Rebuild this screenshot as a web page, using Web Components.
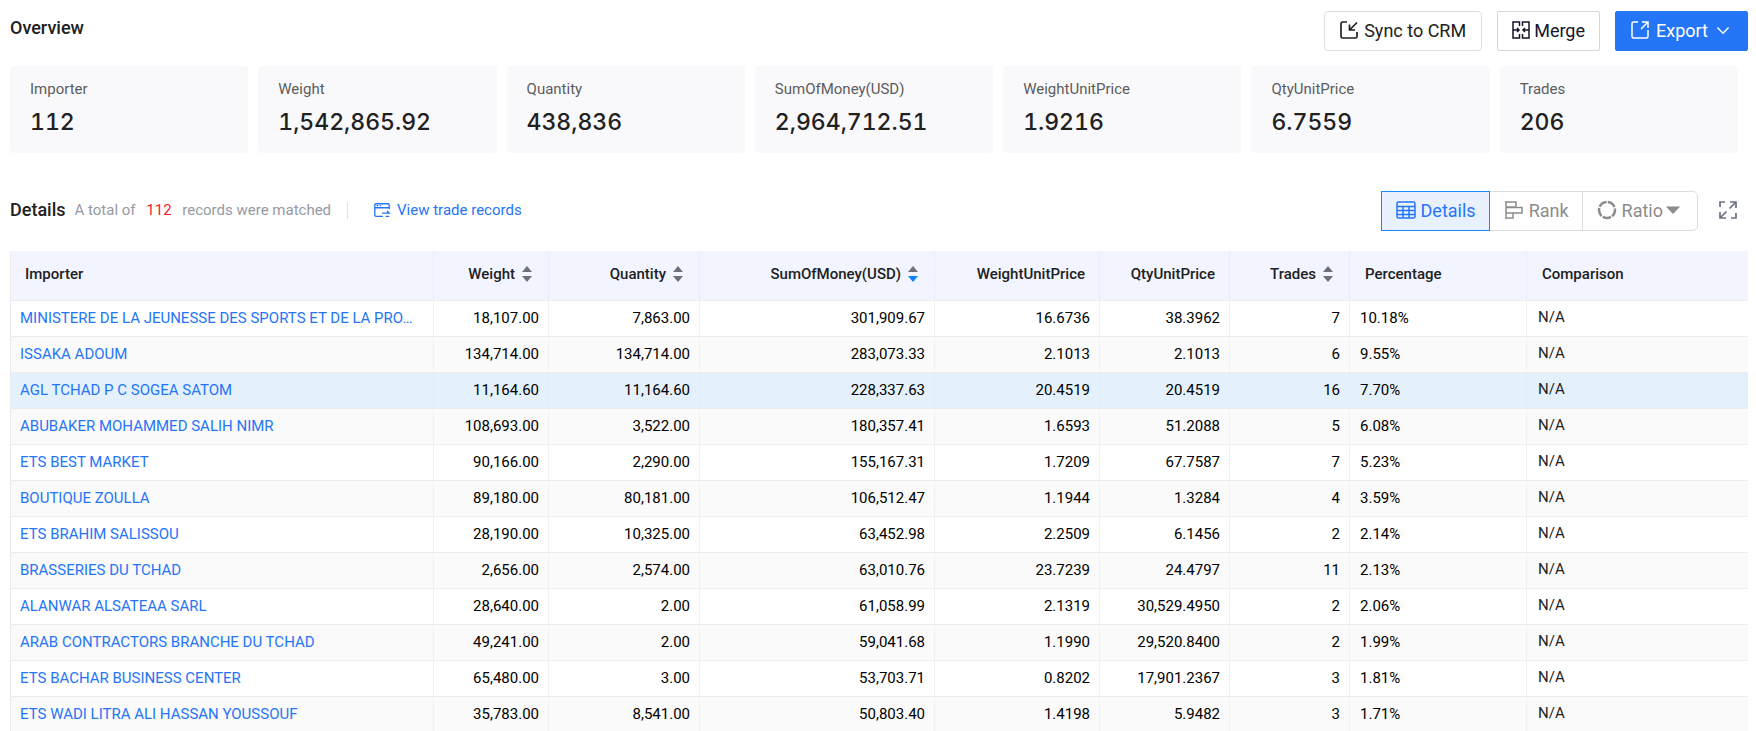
<!DOCTYPE html>
<html lang="en">
<head>
<meta charset="utf-8">
<title>Overview</title>
<style>
    html, body {
        margin: 0;
        height: 100%;
        overflow: hidden;
    }
    body {
        background: #fff;
        color: #212121;
        font-family: Roboto, 'Liberation Sans', sans-serif;
        font-size: 15px;
    }
</style>
</head>
<body>
<trade-page></trade-page>

<script>
const icons = {
    sync: '<path d="M8 2H3.500A1.500 1.500 0 0 0 2 3.500V16.500A1.500 1.500 0 0 0 3.500 18H16.500A1.500 1.500 0 0 0 18 16.500V12M18 2.500L10.500 10M10.500 4.500V10H16" stroke-width="1.700"/>',
    merge: '<path d="M8.500 6V2H2V18H8.500V14M11.500 6V2H18V18H11.500V14M2 10H8M18 10H12M6 8L8 10L6 12M14 8L12 10L14 12" stroke-width="1.500"/>',
    export: '<path d="M8 2H3.500A1.500 1.500 0 0 0 2 3.500V16.500A1.500 1.500 0 0 0 3.500 18H16.500A1.500 1.500 0 0 0 18 16.500V10M11 9L18 2M12 2H18V8" stroke-width="1.500"/>',
    down: '<path d="M3 7L10 14L17 7" stroke-width="1.800"/>',
    grid: '<path d="M1 3.500A1.500 1.500 0 0 1 2.500 2H17.500A1.500 1.500 0 0 1 19 3.500V16.500A1.500 1.500 0 0 1 17.500 18H2.500A1.500 1.500 0 0 1 1 16.500ZM1 6.500H19M1 10.500H19M1 14.500H19M7 6.500V18M13 6.500V18" stroke-width="1.500"/>',
    rank: '<path d="M2 1V19M2 2H12V7H2M2 7.500H18V13H2M2 13H9V18H2" stroke-width="1.500"/>',
    ratio: '<circle cx="10" cy="10" r="8" stroke-width="2.500" pathLength="60" stroke-dasharray="10.500 1.500" stroke-dashoffset="-1" transform="rotate(-90 10 10)"/>',
    caret: '<path d="M1 5.500H19L10 15Z" fill="currentColor" stroke="none"/>',
    full: '<path d="M2 7V2H7M18 13V18H13M12 2H18V8M18 2L11.500 8.500M8 18H2V12M2 18L8.500 11.500" stroke-width="1.700"/>',
    records: '<path d="M18 9V4.500A1.500 1.500 0 0 0 16.500 3H3.500A1.500 1.500 0 0 0 2 4.500V15.500A1.500 1.500 0 0 0 3.500 17H11M2 7.500H18M4 5.200H6M7.500 5.200H9M10 13.500H18L15.500 11M18 17H14" stroke-width="1.500"/>'
};

class TradeIcon extends HTMLElement {
    connectedCallback() {
        this.root = this.attachShadow({ mode: 'open' });
        this.root.innerHTML = `
            <style>
                :host {
                    display: inline-flex;
                    flex: none;
                    width: 20px;
                    height: 20px;
                }
                svg {
                    width: 100%;
                    height: 100%;
                    fill: none;
                    stroke: currentColor;
                }
            </style>
            <svg viewBox="${this.getAttribute('crop') || '0 0 20 20'}" aria-hidden="true">${icons[this.getAttribute('name')]}</svg>
        `;
    }
}

class TradeButton extends HTMLElement {
    connectedCallback() {
        this.root = this.attachShadow({ mode: 'open' });
        this.root.innerHTML = `
            <style>
                :host {
                    display: block;
                }
                button {
                    display: flex;
                    align-items: center;
                    gap: 6px;
                    height: 40px;
                    padding: 0 15px 2px;
                    border: 1px solid #dcdfe6;
                    border-radius: 4px;
                    background: #fff;
                    color: #212121;
                    font: inherit;
                    font-size: 18px;
                    cursor: pointer;
                }
                :host([kind=primary]) button {
                    gap: 7px;
                    padding: 0 16px 2px 15px;
                    border-color: #2575f7;
                    border-radius: 2px;
                    background: #2575f7;
                    color: #fff;
                }
                :host([kind=square]) button {
                    gap: 4px;
                    padding: 0 14px 2px;
                    border-color: #d5d6e0;
                    border-radius: 2px;
                    color: #15152b;
                }
            </style>
            <button type="button"><slot></slot></button>
        `;
    }
}

class StatCard extends HTMLElement {
    connectedCallback() {
        this.root = this.attachShadow({ mode: 'open' });
        this.root.innerHTML = `
            <style>
                :host {
                    display: block;
                    flex: 1;
                    min-width: 0;
                    padding: 12px 20px 14px;
                    border-radius: 4px;
                    background: #f9f9fc;
                }
                .label {
                    color: #5c5c5c;
                    line-height: 22px;
                }
                .value {
                    margin-top: 5px;
                    font-family: Inter, Roboto, sans-serif;
                    font-size: 23px;
                    font-weight: 500;
                    font-variant-numeric: tabular-nums;
                    line-height: 34px;
                }
            </style>
            <div class="label">${this.getAttribute('label')}</div>
            <div class="value"><slot></slot></div>
        `;
    }
}

class ViewSwitch extends HTMLElement {
    connectedCallback() {
        this.root = this.attachShadow({ mode: 'open' });
        this.root.innerHTML = `
            <style>
                :host {
                    display: flex;
                }
                button {
                    display: flex;
                    align-items: center;
                    gap: 5px;
                    height: 40px;
                    margin-left: -1px;
                    padding: 0 13px 2px 14px;
                    border: 1px solid #dcdcdc;
                    background: #fff;
                    color: #8c8c8c;
                    font: inherit;
                    font-size: 18px;
                    cursor: pointer;
                }
                button:first-child {
                    border-radius: 5px 0 0 5px;
                }
                button:last-child {
                    border-radius: 0 5px 5px 0;
                }
                button[aria-pressed=true] {
                    z-index: 1;
                    border-color: #1989fa;
                    background: #e9f1ff;
                    color: #2575f7;
                }
                .menu {
                    gap: 2px;
                    padding-right: 16px;
                }
                .menu trade-icon:first-child {
                    margin-right: 3px;
                }
                .small {
                    width: 16px;
                    height: 16px;
                }
            </style>
            <button type="button" aria-pressed="true"><trade-icon name="grid"></trade-icon>Details</button>
            <button type="button" aria-pressed="false"><trade-icon name="rank"></trade-icon>Rank</button>
            <button type="button" aria-pressed="false" class="menu"><trade-icon name="ratio"></trade-icon>Ratio<trade-icon class="small" name="caret"></trade-icon></button>
        `;
    }
}

const columns = [
    { title: 'Importer', width: 423, left: true },
    { title: 'Weight', width: 115, sort: true },
    { title: 'Quantity', width: 151, sort: true },
    { title: 'SumOfMoney(USD)', width: 235, sort: true, active: true },
    { title: 'WeightUnitPrice', width: 165 },
    { title: 'QtyUnitPrice', width: 130 },
    { title: 'Trades', width: 120, sort: true },
    { title: 'Percentage', width: 177, left: true },
    { title: 'Comparison', left: true }
];

const rows = [
    ['MINISTERE DE LA JEUNESSE DES SPORTS ET DE LA PRO…', '18,107.00', '7,863.00', '301,909.67', '16.6736', '38.3962', '7', '10.18%'],
    ['ISSAKA ADOUM', '134,714.00', '134,714.00', '283,073.33', '2.1013', '2.1013', '6', '9.55%'],
    ['AGL TCHAD P C SOGEA SATOM', '11,164.60', '11,164.60', '228,337.63', '20.4519', '20.4519', '16', '7.70%'],
    ['ABUBAKER MOHAMMED SALIH NIMR', '108,693.00', '3,522.00', '180,357.41', '1.6593', '51.2088', '5', '6.08%'],
    ['ETS BEST MARKET', '90,166.00', '2,290.00', '155,167.31', '1.7209', '67.7587', '7', '5.23%'],
    ['BOUTIQUE ZOULLA', '89,180.00', '80,181.00', '106,512.47', '1.1944', '1.3284', '4', '3.59%'],
    ['ETS BRAHIM SALISSOU', '28,190.00', '10,325.00', '63,452.98', '2.2509', '6.1456', '2', '2.14%'],
    ['BRASSERIES DU TCHAD', '2,656.00', '2,574.00', '63,010.76', '23.7239', '24.4797', '11', '2.13%'],
    ['ALANWAR ALSATEAA SARL', '28,640.00', '2.00', '61,058.99', '2.1319', '30,529.4950', '2', '2.06%'],
    ['ARAB CONTRACTORS BRANCHE DU TCHAD', '49,241.00', '2.00', '59,041.68', '1.1990', '29,520.8400', '2', '1.99%'],
    ['ETS BACHAR BUSINESS CENTER', '65,480.00', '3.00', '53,703.71', '0.8202', '17,901.2367', '3', '1.81%'],
    ['ETS WADI LITRA ALI HASSAN YOUSSOUF', '35,783.00', '8,541.00', '50,803.40', '1.4198', '5.9482', '3', '1.71%']
];

class TradeTable extends HTMLElement {
    connectedCallback() {
        this.root = this.attachShadow({ mode: 'open' });
        this.root.innerHTML = `
            <style>
                :host {
                    display: block;
                }
                table {
                    width: 100%;
                    table-layout: fixed;
                    border-collapse: separate;
                    border-spacing: 0;
                    border-left: 1px solid #ebebeb;
                }
                th, td {
                    box-sizing: border-box;
                    border-right: 1px solid #f0f1f4;
                    border-bottom: 1px solid #ececee;
                    text-align: right;
                    white-space: nowrap;
                }
                th:last-child, td:last-child {
                    border-right: 0;
                }
                th {
                    height: 50px;
                    padding: 0 14px 4px 15px;
                    border-right-color: #ebeef7;
                    background: #f2f5ff;
                    font-size: 15px;
                    font-weight: 500;
                }
                td {
                    height: 36px;
                    padding: 0 9px 2px 10px;
                    color: #000;
                }
                .left {
                    text-align: left;
                }
                th:first-child {
                    padding-left: 14px;
                }
                td:first-child {
                    padding-left: 9px;
                }
                td:last-child {
                    padding-bottom: 4px;
                    padding-left: 11px;
                    color: #212121;
                }
                tr:nth-child(even) td {
                    background: #fafafa;
                }
                tr.hover td {
                    border-right-color: #e1edf9;
                    background: #e4f1fd;
                }
                a {
                    color: #2575f7;
                    text-decoration: none;
                }
                th button {
                    display: inline-flex;
                    align-items: center;
                    gap: 7px;
                    padding: 0;
                    border: 0;
                    background: none;
                    color: inherit;
                    font: inherit;
                    cursor: pointer;
                }
                th svg {
                    width: 10px;
                    height: 16px;
                    margin-right: 2px;
                    fill: #6e7079;
                }
                .active {
                    fill: #0a84ff;
                }
            </style>
            <table>
                <colgroup>${columns.map(c => `<col${c.width ? ` style="width: ${c.width}px"` : ''}>`).join('')}</colgroup>
                <thead><tr>${columns.map(c => this.heading(c)).join('')}</tr></thead>
                <tbody>${rows.map((r, i) => this.row(r, i)).join('')}</tbody>
            </table>
        `;
    }

    heading(c) {
        const title = c.sort
            ? `<button type="button">${c.title}<svg viewBox="0 0 10 16" aria-hidden="true"><path d="M0 6L5 0L10 6Z"/><path${c.active ? ' class="active"' : ''} d="M0 10H10L5 16Z"/></svg></button>`
            : c.title;
        return `<th scope="col"${c.left ? ' class="left"' : ''}>${title}</th>`;
    }

    row(r, i) {
        const cells = [`<a href="#">${r[0]}</a>`, ...r.slice(1), 'N/A'];
        return `<tr${i === 2 ? ' class="hover"' : ''}>${cells.map((cell, n) => `<td${columns[n].left ? ' class="left"' : ''}>${cell}</td>`).join('')}</tr>`;
    }
}

class TradePage extends HTMLElement {
    connectedCallback() {
        this.root = this.attachShadow({ mode: 'open' });
        this.root.innerHTML = `
            <style>
                :host {
                    display: block;
                    padding: 11px 8px 0 10px;
                }
                header, .actions, .stats, .toolbar, .summary, .views {
                    display: flex;
                    align-items: center;
                }
                header, .toolbar {
                    justify-content: space-between;
                }
                h2 {
                    margin: 0;
                    color: #212121;
                    font-size: 18px;
                    font-weight: 500;
                    line-height: 24px;
                }
                header h2 {
                    padding-bottom: 6px;
                }
                .actions {
                    gap: 15px;
                }
                .stats {
                    gap: 10px;
                    margin: 15px 10px 38px 0;
                }
                .summary {
                    padding-bottom: 2px;
                    color: #9799a3;
                }
                .summary p {
                    margin: 0 16px 0 9px;
                }
                .summary b {
                    margin: 0 7px;
                    color: #f5222d;
                    font-weight: 400;
                }
                .summary a {
                    display: flex;
                    align-items: center;
                    gap: 6px;
                    padding-left: 26px;
                    background: linear-gradient(#dfe1e6, #dfe1e6) left / 1px 17px no-repeat;
                    color: #2575f7;
                    text-decoration: none;
                }
                .views {
                    gap: 20px;
                    padding-right: 10px;
                }
                .full {
                    display: flex;
                    padding: 0 0 2px;
                    border: 0;
                    background: none;
                    color: #6e7085;
                    cursor: pointer;
                }
                .small {
                    width: 18px;
                    height: 18px;
                }
                .chevron {
                    width: 16px;
                    height: 16px;
                }
                trade-table {
                    margin-top: 20px;
                }
            </style>
            <header>
                <h2>Overview</h2>
                <div class="actions">
                    <trade-button><trade-icon class="small" name="sync" crop="1 1 18 18"></trade-icon>Sync to CRM</trade-button>
                    <trade-button kind="square"><trade-icon class="small" name="merge" crop="1 1 18 18"></trade-icon>Merge</trade-button>
                    <trade-button kind="primary"><trade-icon class="small" name="export" crop="1 1 18 18"></trade-icon>Export <trade-icon class="chevron" name="down"></trade-icon></trade-button>
                </div>
            </header>
            <section class="stats">
                <stat-card label="Importer">112</stat-card>
                <stat-card label="Weight">1,542,865.92</stat-card>
                <stat-card label="Quantity">438,836</stat-card>
                <stat-card label="SumOfMoney(USD)">2,964,712.51</stat-card>
                <stat-card label="WeightUnitPrice">1.9216</stat-card>
                <stat-card label="QtyUnitPrice">6.7559</stat-card>
                <stat-card label="Trades">206</stat-card>
            </section>
            <div class="toolbar">
                <div class="summary">
                    <h2>Details</h2>
                    <p>A total of <b>112</b> records were matched</p>
                    <a href="#"><trade-icon class="small" name="records"></trade-icon>View trade records</a>
                </div>
                <div class="views">
                    <view-switch></view-switch>
                    <button type="button" class="full" aria-label="Full screen"><trade-icon name="full"></trade-icon></button>
                </div>
            </div>
            <trade-table></trade-table>
        `;
    }
}

customElements.define('trade-icon', TradeIcon);
customElements.define('trade-button', TradeButton);
customElements.define('stat-card', StatCard);
customElements.define('view-switch', ViewSwitch);
customElements.define('trade-table', TradeTable);
customElements.define('trade-page', TradePage);
</script>
</body>
</html>
